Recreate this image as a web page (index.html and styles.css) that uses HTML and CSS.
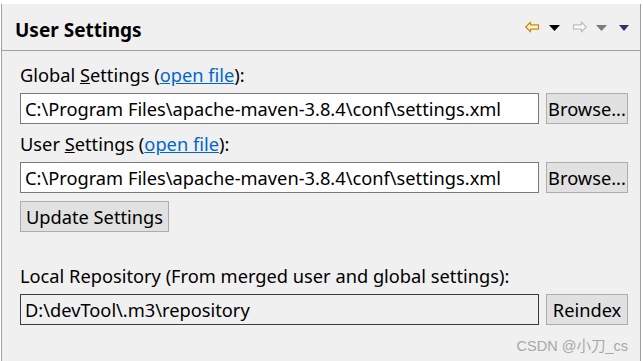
FILE: index.html
```html
<!DOCTYPE html>
<html>
<head>
<meta charset="utf-8">
<link rel="stylesheet" href="styles.css">
</head>
<body>
<div class="frame">
  <div class="header">
    <div class="title">User Settings</div>
    <div class="tools">
      <svg class="arrow" width="15" height="12" viewBox="0 0 15 12"><path d="M0.8 6 L5.5 1.2 L5.5 3.8 L13.5 3.8 L13.5 8.2 L5.5 8.2 L5.5 10.8 Z" fill="#fff3c8" stroke="#c98a14" stroke-width="1.2" stroke-linejoin="round"/></svg>
      <svg class="tri" width="11" height="6" viewBox="0 0 11 6"><path d="M0 0 H11 L5.5 6 Z" fill="#000"/></svg>
      <svg class="arrow gap" width="15" height="12" viewBox="0 0 15 12"><path d="M14.2 6 L9.5 1.2 L9.5 3.8 L1.5 3.8 L1.5 8.2 L9.5 8.2 L9.5 10.8 Z" fill="#fafafa" stroke="#bdbdbd" stroke-width="1.2" stroke-linejoin="round"/></svg>
      <svg class="tri" width="11" height="6" viewBox="0 0 11 6"><path d="M0 0 H11 L5.5 6 Z" fill="#7a7a7a"/></svg>
      <svg class="tri small" width="10" height="6" viewBox="0 0 10 6"><path d="M0 0 H10 L5 6 Z" fill="#3f2a78"/></svg>
    </div>
  </div>
  <div class="content">
    <div class="label">Global <u>S</u>ettings (<a href="#">open file</a>):</div>
    <div class="row">
      <div class="field">C:\Program Files\apache-maven-3.8.4\conf\settings.xml</div>
      <div class="btn">Browse...</div>
    </div>
    <div class="label">User <u>S</u>ettings (<a href="#">open file</a>):</div>
    <div class="row">
      <div class="field">C:\Program Files\apache-maven-3.8.4\conf\settings.xml</div>
      <div class="btn">Browse...</div>
    </div>
    <div class="row update-row">
      <div class="btn update">Update Settings</div>
    </div>
    <div class="label local">Local Repository (From merged user and global settings):</div>
    <div class="row">
      <div class="field readonly">D:\devTool\.m3\repository</div>
      <div class="btn">Reindex</div>
    </div>
    <div class="watermark">CSDN @小刀_cs</div>
  </div>
</div>
</body>
</html>
```
FILE: styles.css
```css
html, body {
  margin: 0;
  padding: 0;
  background: #ffffff;
}
body {
  font-family: "Noto Sans", "Noto Sans CJK SC", sans-serif;
  color: #000;
  width: 643px;
  height: 361px;
  overflow: hidden;
}
.frame {
  margin: 4px 2px 0 1px;
  height: 357px;
  border-left: 1px solid #a0a0a0;
  border-right: 1px solid #a0a0a0;
  background: #f0f0f0;
}
.header {
  height: 46px;
  border-bottom: 1px solid #a0a0a0;
  display: flex;
  align-items: flex-start;
  justify-content: space-between;
}
.title {
  font-weight: bold;
  font-size: 19px;
  padding: 15px 0 0 13px;
  line-height: 22px;
}
.tools {
  display: flex;
  align-items: center;
  padding: 17px 11px 0 0;
}
.tools svg { display: block; }
.arrow { margin-right: 9px; }
.tri { margin-right: 12px; margin-top: 1px; }
.tri.small { margin-right: 0; margin-top: 2px; }
.content {
  padding: 13px 12px 0 18px;
  display: flex;
  flex-direction: column;
  font-size: 18.25px;
}
.label {
  line-height: 22px;
  height: 22px;
  margin-bottom: 7px;
}
.label a { color: #0066cc; }
.label u { text-decoration: underline; }
.row {
  display: flex;
  gap: 7px;
  margin-bottom: 9px;
}
.field {
  flex: 1;
  height: 31px;
  box-sizing: border-box;
  border: 1px solid #7a7a7a;
  background: #fff;
  padding: 0 4px;
  line-height: 29px;
  white-space: nowrap;
  overflow: hidden;
}
.field.readonly {
  background: #f0f0f0;
  border-color: #3c3c3c;
}
.btn {
  width: 82px;
  height: 31px;
  box-sizing: border-box;
  border: 1px solid #adadad;
  background: #e1e1e1;
  text-align: center;
  line-height: 29px;
  white-space: nowrap;
}
.update-row { margin-top: -1px; }
.btn.update {
  width: 149px;
}
.label.local { margin-top: 24px; }
.watermark {
  align-self: flex-end;
  font-family: "Liberation Sans", "Noto Sans CJK SC", sans-serif;
  font-size: 14.5px;
  color: #a8a8a8;
  margin-top: 0;
}
```
